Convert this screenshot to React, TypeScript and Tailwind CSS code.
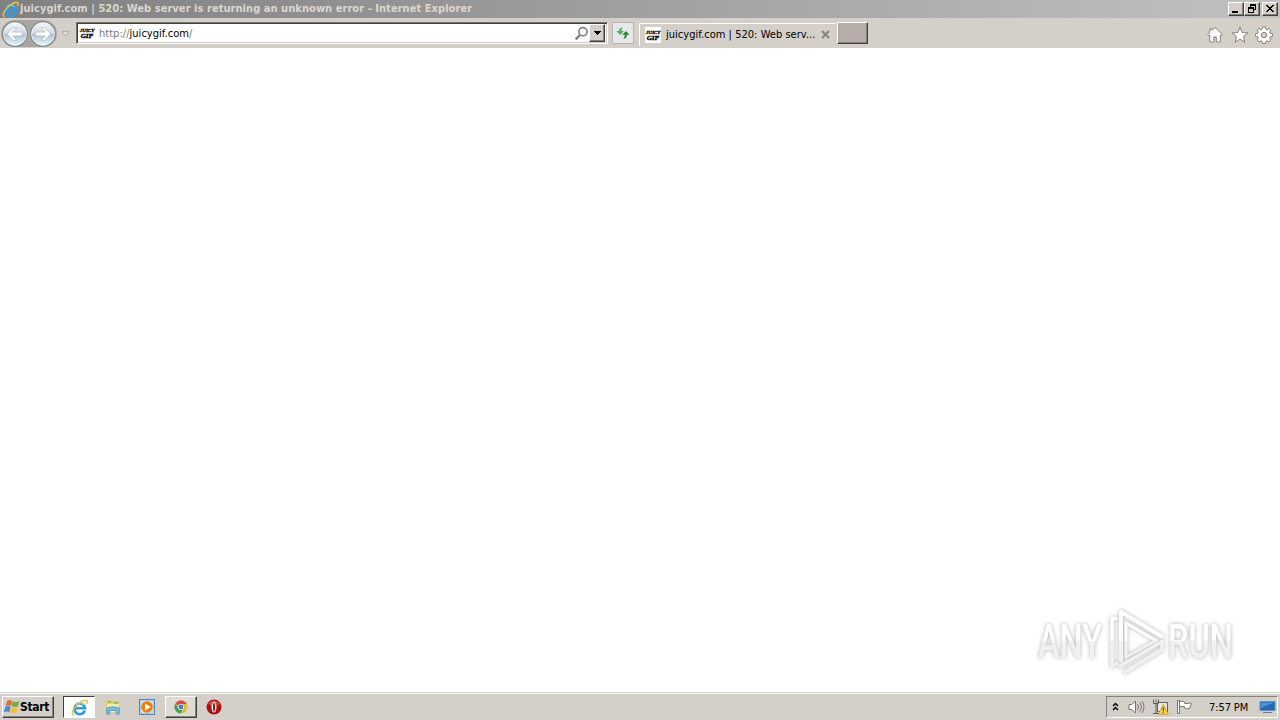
import type { ReactNode } from "react";
import clsx from "clsx";

const RAISED =
  "border border-t-white border-l-white border-r-[#404040] border-b-[#404040] shadow-[inset_-1px_-1px_0_#87827c]";

function IeLogo({ size }: { size: number }) {
  return (
    <svg width={size} height={size} viewBox="0 0 16 16" fill="none" className="shrink-0">
      <path d="M13 10.8A5 5 0 1 1 13.2 8.7H4.4" stroke="#2f9be0" strokeWidth="2.5" />
      <path d="M4.6 5.6a4.6 4.6 0 0 1 7.4 0" stroke="#7fd0f7" strokeWidth="1" />
      <path d="M2.6 14.8C-.7 13.9 2.4 8.4 6.8 4.7 10.8 1.3 15 .3 15.2 2.4c0 .7-.3 1.5-.7 2.2" stroke="#edc040" strokeWidth="1.4" />
    </svg>
  );
}

function SiteIcon() {
  return (
    <div className="flex h-4 w-4 shrink-0 flex-col items-center justify-center bg-white font-['Liberation_Serif',serif] font-bold italic text-black">
      <span className="text-[5px] leading-[5px] [-webkit-text-stroke:0.3px_black]">JUICY</span>
      <span className="text-[7px] leading-[6px] [-webkit-text-stroke:0.4px_black]">GIF</span>
    </div>
  );
}

function NavButton({ flip }: { flip?: boolean }) {
  return (
    <svg width="28" height="28" viewBox="0 0 28 28" className={clsx("shrink-0", flip && "-scale-x-100")}>
      <defs>
        <linearGradient id="nav" x1="0" y1="0" x2="0" y2="1">
          <stop offset="0" stopColor="#f4f6f8" />
          <stop offset=".48" stopColor="#d0d8e0" />
          <stop offset=".52" stopColor="#b3c1ce" />
          <stop offset="1" stopColor="#dff8ff" />
        </linearGradient>
      </defs>
      <circle cx="14" cy="14" r="12.4" fill="#f4f6f7" stroke="#85898d" strokeWidth="1.2" />
      <circle cx="14" cy="14" r="11" fill="url(#nav)" />
      <path
        d="M12.2 7.6h3.6l-4.2 4.5h9.6v3.8h-9.6l4.2 4.5h-3.6L6.4 14Z"
        fill="#fff"
        stroke="#a3b0bc"
        strokeWidth=".6"
      />
    </svg>
  );
}

function WindowButton({ children }: { children: ReactNode }) {
  return (
    <div className={clsx("flex h-[14px] w-4 items-center justify-center bg-[#d4d0c8]", RAISED)}>
      <svg width="12" height="10" viewBox="0 0 12 10" fill="none" stroke="#000" shapeRendering="crispEdges">
        {children}
      </svg>
    </div>
  );
}

function TitleBar() {
  return (
    <div className="flex h-[18px] items-center bg-linear-to-r from-[#808080] to-[#c1c1c1] pl-[2px] pr-[2px]">
      <IeLogo size={17} />
      <span className="ml-px whitespace-nowrap text-[11px] font-bold leading-[18px] tracking-[0.055px] text-[#dad7d0]">
        juicygif.com | 520: Web server is returning an unknown error - Internet Explorer
      </span>
      <div className="ml-auto flex">
        <WindowButton>
          <path d="M2 8h6" strokeWidth="2" />
        </WindowButton>
        <WindowButton>
          <path d="M4 .5h6M4 1.5h6M9.5 1v5M4.5 1v3M8 5.5h2M2 3.5h6M2 4.5h6M2.5 4v5M7.5 4v5M2 8.5h6" />
        </WindowButton>
        <div className="ml-[2px]">
          <WindowButton>
            <path d="m2 1 7 7M3 1l7 7M10 1 3 8M9 1 2 8" />
          </WindowButton>
        </div>
      </div>
    </div>
  );
}

function Toolbar() {
  return (
    <div className="flex h-[30px] items-start bg-[#d4cfc9]">
      <div className="mt-[2px] ml-px flex h-[27px] w-[56px] items-center rounded-full bg-[#aaa7a3]">
        <NavButton />
        <NavButton flip />
      </div>
      <svg width="9" height="6" viewBox="0 0 9 6" className="mt-[13px] ml-[4px]">
        <path d="M.7.7h7.6L4.5 5Z" fill="#e8e6e2" stroke="#aaa69f" />
      </svg>

      {/* Address bar */}
      <div className="mt-[4px] ml-[6px] flex h-[22px] w-[532px] items-center border border-t-[#77736e] border-l-[#77736e] border-r-white border-b-white bg-white shadow-[inset_1px_1px_0_#404040,inset_-1px_-1px_0_#d4cfc9]">
        <div className="ml-[2px]">
          <SiteIcon />
        </div>
        <span className="mt-[2px] ml-[4px] text-[11px] leading-[18px] tracking-[0.03px] text-black">
          <span className="text-[#77797c]">http://</span>juicygif.com<span className="text-[#77797c]">/</span>
        </span>
        <svg width="15" height="15" viewBox="0 0 15 15" fill="none" stroke="#85837f" className="ml-auto">
          <circle cx="9" cy="5.8" r="4.1" strokeWidth="1.7" />
          <path d="m6 9-4.3 4.3" strokeWidth="2.4" />
        </svg>
        <div className={clsx("mr-[2px] flex h-[18px] w-4 items-center justify-center bg-[#d4cfc9]", RAISED)}>
          <svg width="7" height="4" viewBox="0 0 7 4" shapeRendering="crispEdges">
            <path d="M0 0h7L3.5 4Z" />
          </svg>
        </div>
      </div>

      <div className="mt-[4px] ml-[4px] flex h-[22px] w-[22px] items-center justify-center rounded-[1px] border border-[#b4b4b4] bg-[#e6e8ea]">
        <svg width="16" height="16" viewBox="0 0 16 16">
          <path d="M7.6 2.5Q4 2.4 4 6H1.3l3.9 4L9 6H6.4Q6.3 4 7.6 2.5Z" fill="#52b257" />
          <path d="M8.4 13.8q3.6 0 3.6-4h2.6L10.9 5.9 7.2 9.8h2.5q.1 2.2-1.3 4Z" fill="#2b872f" />
        </svg>
      </div>

      {/* Tabs */}
      <div className="mt-[5px] ml-[5px] flex h-[23px] w-[197px] items-center border-t border-l border-white pl-[5px]">
        <SiteIcon />
        <span className="ml-[5px] w-[152px] whitespace-nowrap text-[11px] leading-[20px] tracking-[0.03px] text-black">
          juicygif.com | 520: Web serv...
        </span>
        <svg width="9" height="9" viewBox="0 0 9 9" className="mb-px ml-[3px] shrink-0">
          <path d="m1 1 7 7M8 1 1 8" stroke="#85817c" strokeWidth="1.9" />
        </svg>
      </div>
      <div className={clsx("mt-[4px] ml-px h-[22px] w-[31px] bg-[#b6ada8]", RAISED)} />

      <div className="mt-[8px] mr-[7px] ml-auto flex gap-[6.5px]">
        <svg width="18" height="18" viewBox="0 0 18 18" fill="#fff" stroke="#85837f" strokeWidth="1">
          <path d="m9 1.5 7.5 7-1.2 1.3-1-.9v7h-4v-5H7.8v5h-4v-7l-1 .9-1.3-1.3L4 6.2V2.7h2v1.6Z" />
        </svg>
        <svg width="18" height="18" viewBox="0 0 18 18" fill="#fff" stroke="#85837f" strokeWidth="1">
          <path d="m9 1 2.1 5.6 6 .3-4.7 3.7 1.6 5.8L9 13.1l-5 3.3 1.6-5.8L.9 6.9l6-.3Z" />
        </svg>
        <svg width="18" height="18" viewBox="0 0 18 18" fill="#fff" stroke="#85837f" strokeWidth="1">
          <path d="M7.5 1h3l.4 2.2 1.2.5L14 2.4 15.9 4l-1.2 2 .5 1.2 2.2.4v2.9l-2.2.4-.5 1.2 1.2 1.9-1.9 2-2-1.2-1.1.5-.4 2.2h-3l-.4-2.2-1.1-.5L4 16l-2-2 1.3-1.9-.5-1.2-2.2-.4V7.6l2.2-.4L3.3 6 2 4l2-1.6 2 1.3 1.1-.5Z" />
          <circle cx="9" cy="9" r="2.7" fill="#d4cfc9" />
        </svg>
      </div>
    </div>
  );
}

function Watermark() {
  return (
    <svg
      width="216"
      height="72"
      viewBox="0 0 216 72"
      className="overflow-visible drop-shadow-[0_0_2px_rgba(0,0,0,0.3)]"
    >
      <defs>
        <linearGradient id="fade" gradientUnits="userSpaceOnUse" x1="0" y1="0" x2="0" y2="72">
          <stop offset=".49" stopColor="#fff" />
          <stop offset=".5" stopColor="#f1f1f1" />
        </linearGradient>
      </defs>
      <g fill="url(#fade)" className="font-['Roboto',sans-serif] text-[49px] font-medium">
        <text x="8" y="53" textLength="64" lengthAdjust="spacingAndGlyphs">ANY</text>
        <text x="138" y="53" textLength="65" lengthAdjust="spacingAndGlyphs">RUN</text>
      </g>
      <g fill="none" stroke="url(#fade)" strokeWidth="4" strokeLinejoin="round" strokeLinecap="round">
        <path d="M91 56V7l41 24.5" />
        <path d="M96 18v34l30-16.5Z" strokeWidth="3" />
        <path d="M86 13.5h-4V61l5-2.5M95 67l37-22.5v-8L90 61" strokeWidth="3.5" />
      </g>
    </svg>
  );
}

function Taskbar() {
  return (
    <div className="flex h-[28px] items-center border-t border-[#d4cfc9] bg-[#d4cfc9] pr-[2px] pl-[2px] shadow-[inset_0_1px_0_#fff]">
      <div className={clsx("mt-px flex h-[22px] w-[52px] items-center bg-[#d4cfc9] pl-px", RAISED)}>
        <svg width="16" height="16" viewBox="0 0 16 16" className="shrink-0">
          <path d="M3.2 1.8q3-1.7 5 .2L6.9 7Q4.5 5.5 1.7 7Z" fill="#e66a31" />
          <path d="M8.7 2.3Q12 4 15.4 2L14 7.2q-3 1.6-6.4-.1Z" fill="#75ad43" />
          <path d="M1.4 7.8q3-1.6 5.2 0l-1.4 5.4q-2.3-1.6-5.2 0Z" fill="#438ad0" />
          <path d="M7.4 8q3 1.7 6.4.2l-1.4 5.2q-3 1.6-6.4 0Z" fill="#f2bf38" />
        </svg>
        <span className="text-[12px] font-bold leading-[20px] tracking-[-0.3px] text-black">Start</span>
      </div>

      <div className="mt-px ml-[9px] flex h-[22px] w-[32px] items-center justify-center border border-t-[#404040] border-l-[#404040] border-r-white border-b-white bg-white">
        <IeLogo size={17} />
      </div>
      <svg width="16" height="16" viewBox="0 0 16 16" className="mt-px ml-[10px]">
        <path d="M1 1.5h5l1 1h7.5V13H1Z" fill="#e2c663" />
        <path d="M2 4.5h12V13H2Z" fill="#f7e9a5" />
        <path d="M3 3h3M8.5 4H13" stroke="#5ba55b" />
        <path d="M1.7 15V9Q8 6.5 14.3 9v6h-3.2v-3.5H4.9V15Z" fill="#78bce6" stroke="#428fc0" strokeWidth=".7" />
      </svg>
      <svg width="16" height="16" viewBox="0 0 16 16" className="mt-px ml-[18px]">
        <rect x=".5" y=".5" width="15" height="15" fill="#a8cdea" stroke="#5287bd" />
        <path d="M2 2h12v12H2Z" fill="#cfe1ee" />
        <circle cx="8" cy="8" r="5.8" fill="#f17c0b" />
        <path d="M6 4.5v7L11.7 8Z" fill="#fff" />
      </svg>
      <div className={clsx("mt-px ml-[10px] flex h-[22px] w-[32px] items-center justify-center bg-[#dedbd6]", RAISED)}>
        <svg width="14" height="14" viewBox="0 0 14 14">
          <circle cx="7" cy="7" r="6.5" fill="#e0bd35" />
          <path d="M7 7 1.4 3.7A6.5 6.5 0 0 1 12.8 4H7Z" fill="#d94c3d" />
          <path d="M1.4 3.7A6.5 6.5 0 0 0 6.4 13.5L9.6 8.5 4.3 8.5Z" fill="#3ba25a" />
          <circle cx="7" cy="7" r="3.1" fill="#f3f3f3" />
          <circle cx="7" cy="7" r="2.4" fill="#3e7fc8" />
        </svg>
      </div>
      <svg width="16" height="16" viewBox="0 0 16 16" className="mt-px ml-[9px]">
        <circle cx="8" cy="8" r="7.5" fill="#a9110f" />
        <path d="M2 5a7 7 0 0 1 12 0Q8 9 2 5Z" fill="#cf4038" />
        <ellipse cx="8" cy="8" rx="2.5" ry="5.5" fill="#f4eeee" />
        <ellipse cx="8" cy="8" rx="1" ry="4.5" fill="#8d1110" />
      </svg>

      {/* Tray */}
      <div className="mt-px ml-auto flex h-[22px] w-[172px] items-center border border-t-[#87827c] border-l-[#87827c] border-r-white border-b-white pl-[5px]">
        <svg width="7" height="9" viewBox="0 0 7 9" fill="none" stroke="#000" strokeWidth="1.4" className="mb-[2px]">
          <path d="m1 4 2.5-2.6L6 4M1 8l2.5-2.6L6 8" />
        </svg>
        <svg width="17" height="16" viewBox="0 0 17 16" fill="none" stroke="#77746f" className="ml-[9px]">
          <path d="M1 5.5h3L7.5 2v12L4 10.5H1Z" fill="#fff" />
          <path d="M9.5 5q2 3 0 6M11.7 3.5q3.3 4.5 0 9M14 2q4 6 0 12" />
        </svg>
        <svg width="17" height="16" viewBox="0 0 17 16" fill="none" className="ml-[7px]">
          <path d="M5.5 3.5h10v9h-10Z" fill="#e9e9e7" stroke="#64615d" />
          <path d="M1.5.5v4h5v-4M4 .5v3M4 4.5V14M1 14.5h7" stroke="#5d5955" />
          <path d="m11.3 5.5 5 9.7h-10Z" fill="#fbd53c" stroke="#b88b16" strokeWidth=".7" />
          <path d="M11.3 8.5v3M11.3 12.5v1.3" stroke="#342a0b" strokeWidth="1.2" />
        </svg>
        <svg width="17" height="16" viewBox="0 0 17 16" fill="#fff" stroke="#77746f" className="ml-[7px]">
          <path d="M3.5 2.5q3-1 5 .5v1.3q3 .7 6-.3l1 .5-2 5q-3 .8-5-.5v-1.3q-2-.7-5 0Z" />
          <path d="M1.5 1.5h2v13h-2Z" />
        </svg>
        <span className="mt-px ml-[16px] whitespace-nowrap text-[11px] leading-[20px] tracking-[-0.1px] text-black">7:57 PM</span>
        <svg width="17" height="14" viewBox="0 0 17 14" className="mr-px ml-auto">
          <path d="M1 1.5h15v9H1Z" fill="#2468b5" stroke="#5b93c9" />
          <path d="M2 2.5h13L2 8Z" fill="#4f93d6" />
          <path d="M4 12.5h9" stroke="#687b91" />
        </svg>
      </div>
    </div>
  );
}

export default function App() {
  return (
    <div className="flex h-[720px] w-[1280px] flex-col overflow-hidden bg-white font-['DejaVu_Sans_Condensed','DejaVu_Sans',sans-serif]">
      <TitleBar />
      <Toolbar />
      <main className="flex flex-1 items-end justify-end pr-[34px] pb-[15px]">
        <Watermark />
      </main>
      <Taskbar />
    </div>
  );
}
